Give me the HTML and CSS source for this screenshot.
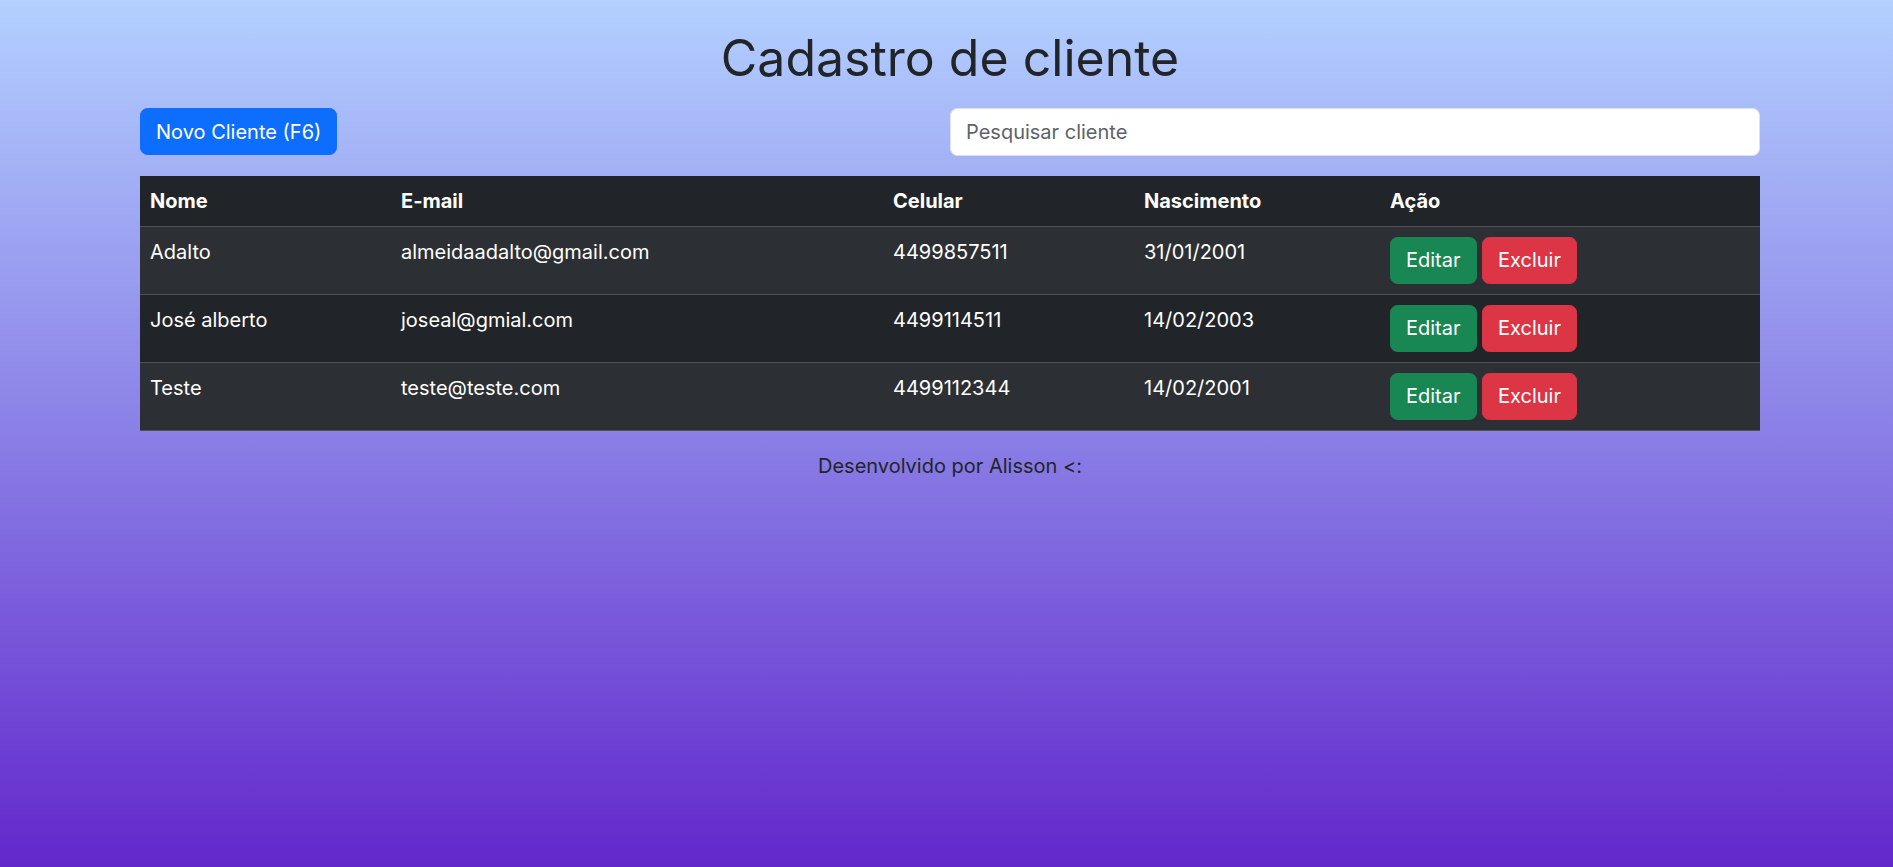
FILE: index.html
```html
<!DOCTYPE html>
<html lang="pt-BR">
<head>
<meta charset="utf-8">
<title>Cadastro de cliente</title>
<link rel="stylesheet" href="styles.css">
</head>
<body>
<div class="page">
  <div class="container">
    <h1 class="title">Cadastro de cliente</h1>
    <div class="toolbar">
      <button class="btn btn-primary">Novo Cliente (F6)</button>
      <input class="search" type="text" placeholder="Pesquisar cliente">
    </div>
    <table class="table">
      <thead>
        <tr>
          <th class="c1">Nome</th>
          <th class="c2">E-mail</th>
          <th class="c3">Celular</th>
          <th class="c4">Nascimento</th>
          <th class="c5">Ação</th>
        </tr>
      </thead>
      <tbody>
        <tr class="odd">
          <td>Adalto</td>
          <td>almeidaadalto@gmail.com</td>
          <td>4499857511</td>
          <td>31/01/2001</td>
          <td><div class="actions"><button class="btn btn-success">Editar</button><button class="btn btn-danger">Excluir</button></div></td>
        </tr>
        <tr>
          <td>José alberto</td>
          <td>joseal@gmial.com</td>
          <td>4499114511</td>
          <td>14/02/2003</td>
          <td><div class="actions"><button class="btn btn-success">Editar</button><button class="btn btn-danger">Excluir</button></div></td>
        </tr>
        <tr class="odd">
          <td>Teste</td>
          <td>teste@teste.com</td>
          <td>4499112344</td>
          <td>14/02/2001</td>
          <td><div class="actions"><button class="btn btn-success">Editar</button><button class="btn btn-danger">Excluir</button></div></td>
        </tr>
      </tbody>
    </table>
    <p class="footer">Desenvolvido por Alisson &lt;:</p>
  </div>
</div>
</body>
</html>
```

FILE: styles.css
```css
* { box-sizing: border-box; }
html, body { margin: 0; padding: 0; }
body {
  font-family: Inter, Roboto, "Liberation Sans", sans-serif;
  font-size: 20px;
  line-height: 1.5;
  color: #212529;
  min-height: 867px;
  background: linear-gradient(to bottom, #b3d0ff 0%, #8a7fe6 50%, #6227cb 100%);
}
.page { min-height: 867px; }
.container {
  width: 1650px;
  margin: 0 0 0 125px;
  padding: 0 15px;
}
.title {
  margin: 0 0 20px;
  padding-top: 28px;
  font-size: 50px;
  font-weight: 400;
  line-height: 60px;
  text-align: center;
}
.toolbar {
  display: flex;
  justify-content: space-between;
  align-items: center;
  margin-bottom: 20px;
}
.btn {
  font-family: inherit;
  font-size: 20px;
  line-height: 30px;
  padding: 7.5px 15px;
  border: 1.25px solid transparent;
  border-radius: 7.5px;
  color: #fff;
  cursor: pointer;
}
.btn-primary { background: #0d6efd; border-color: #0d6efd; }
.btn-success { background: #198754; border-color: #198754; }
.btn-danger { background: #dc3545; border-color: #dc3545; }
.search {
  width: 810px;
  height: 47.5px;
  font-family: inherit;
  font-size: 20px;
  line-height: 30px;
  padding: 7.5px 15px;
  border: 1.25px solid #dee2e6;
  border-radius: 7.5px;
  background: #fff;
  color: #212529;
}
.search::placeholder { color: #5c636a; }
.table {
  width: 100%;
  border-collapse: collapse;
  margin-bottom: 20px;
  color: #fff;
  background: #212529;
  table-layout: fixed;
}
.table th, .table td {
  padding: 10px;
  text-align: left;
  vertical-align: top;
  border-bottom: 1.25px solid #4d5154;
}
.table th { font-weight: 700; }
.c1 { width: 251px; }
.c2 { width: 492px; }
.c3 { width: 251px; }
.c4 { width: 246px; }
.odd td { background: #2c3034; }
.actions { display: flex; gap: 5.5px; }
.footer {
  margin: 0;
  text-align: center;
}
```
